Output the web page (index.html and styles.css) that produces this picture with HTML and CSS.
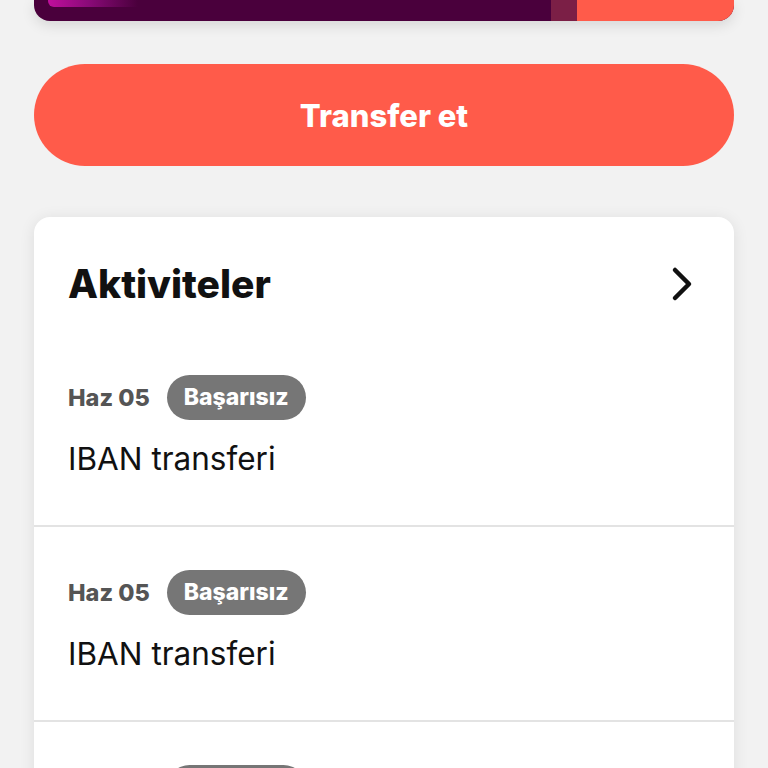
FILE: index.html
```html
<!DOCTYPE html>
<html lang="tr">
<head>
<meta charset="utf-8">
<link rel="stylesheet" href="styles.css">
</head>
<body>
<div class="page">
  <div class="balance-card">
    <div class="balance-main"><div class="glow"></div></div>
    <div class="balance-strip"></div>
    <div class="balance-accent"></div>
  </div>
  <button class="primary-btn">Transfer et</button>
  <section class="activity-card">
    <header class="activity-head">
      <h2 class="activity-title">Aktiviteler</h2>
      <svg class="chevron" width="24" height="36" viewBox="0 0 24 36"><path d="M5 4 L19 18 L5 32" fill="none" stroke="#111" stroke-width="4.5" stroke-linecap="round" stroke-linejoin="round"/></svg>
    </header>
    <div class="activity-row">
      <div class="meta"><span class="date">Haz 05</span><span class="badge">Başarısız</span></div>
      <div class="desc">IBAN transferi</div>
    </div>
    <div class="activity-row">
      <div class="meta"><span class="date">Haz 05</span><span class="badge">Başarısız</span></div>
      <div class="desc">IBAN transferi</div>
    </div>
    <div class="activity-row">
      <div class="meta"><span class="date">Haz 05</span><span class="badge">Başarısız</span></div>
      <div class="desc">IBAN transferi</div>
    </div>
  </section>
</div>
</body>
</html>
```
FILE: styles.css
```css
html, body {
  margin: 0;
  padding: 0;
  background: #f2f2f2;
  font-family: Inter, "Noto Sans", sans-serif;
}
.page {
  padding: 0 34px;
  height: 768px;
  overflow: hidden;
}
.balance-card {
  display: flex;
  height: 21px;
  border-radius: 0 0 16px 16px;
  overflow: hidden;
  background: #4a003c;
  box-shadow: 0 4px 14px rgba(0,0,0,0.12);
}
.balance-main {
  flex: 0 0 503px;
  padding-left: 14px;
}
.glow {
  width: 90px;
  height: 7px;
  border-radius: 0 0 0 6px;
  background: linear-gradient(90deg, #c00f9c 0%, #8a0a78 45%, #4a003c 100%);
}
.balance-strip {
  flex: 0 0 26px;
  background: #7b1f46;
}
.balance-accent {
  flex: 1;
  background: #ff5b4a;
}
.primary-btn {
  display: block;
  width: 100%;
  height: 102px;
  margin-top: 43px;
  border: none;
  border-radius: 51px;
  background: #ff5b4a;
  color: #fff;
  font-family: Inter, "Noto Sans", sans-serif;
  font-weight: 800;
  font-size: 31px;
}
.activity-card {
  margin-top: 51px;
  background: #fff;
  border-radius: 16px;
  box-shadow: 0 2px 16px rgba(0,0,0,0.09);
}
.activity-head {
  display: flex;
  align-items: center;
  justify-content: space-between;
  padding: 44px 40px 25px 34px;
  height: 46px;
}
.activity-title {
  margin: 0;
  font-size: 39px;
  font-weight: 800;
  color: #111;
  line-height: 46px;
}
.chevron {
  display: block;
}
.activity-row {
  padding: 43px 34px 46px;
  border-bottom: 2px solid #e3e3e3;
}
.meta {
  display: flex;
  align-items: center;
  gap: 17px;
  height: 45px;
}
.date {
  font-size: 23.5px;
  font-weight: 800;
  color: #555;
}
.badge {
  height: 45px;
  line-height: 45px;
  padding: 0 17px;
  border-radius: 23px;
  background: #767676;
  color: #fff;
  font-size: 23px;
  font-weight: 800;
}
.desc {
  margin-top: 19px;
  font-size: 31.5px;
  line-height: 40px;
  color: #111;
}
```
